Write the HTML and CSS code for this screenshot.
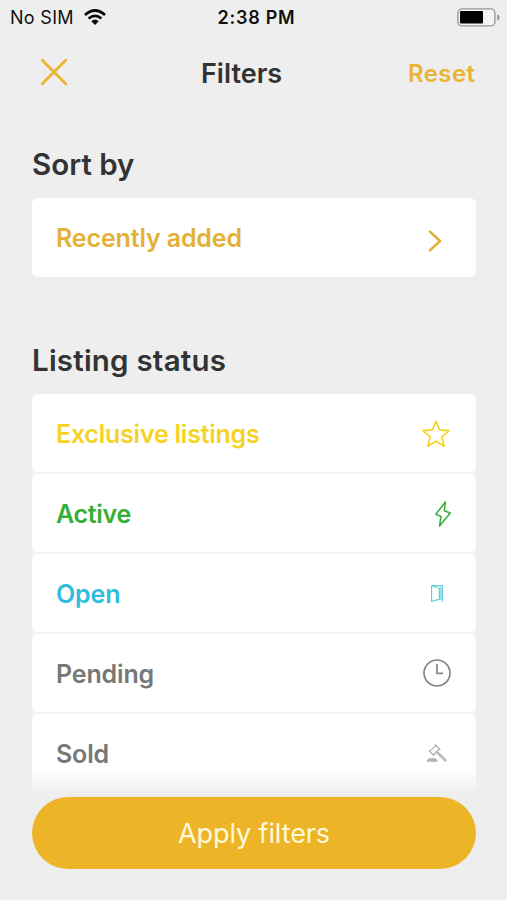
FILE: index.html
```html
<!DOCTYPE html>
<html lang="en">
<head>
<meta charset="utf-8">
<title>Filters</title>
<link rel="stylesheet" href="styles.css">
</head>
<body>
<div class="screen">
  <div class="status-bar">
    <div class="carrier"><span>No SIM</span>
      <svg class="wifi" viewBox="0 0 22 16" width="22" height="16" fill="none" stroke="#080808" stroke-width="2.7"><path d="M1 6Q11-3 21 6M4.6 9.6Q11 4 17.4 9.6"/><path d="M7.3 12.2Q11 9 14.7 12.2L11 16Z" fill="#080808" stroke="none"/></svg>
    </div>
    <span class="time">2:38 PM</span>
    <svg class="battery" viewBox="0 0 43 19" width="43" height="19"><rect x=".9" y=".9" width="37" height="17" rx="4.2" fill="#f4f4f4" stroke="#989898" stroke-width="1.4"/><rect x="3" y="3" width="23" height="12.5" rx="1" fill="#000"/><path d="M40.3 6.5q2.2.7 2.2 3t-2.2 3z" fill="#888"/></svg>
  </div>
  <header class="header">
    <button class="close" aria-label="Close"><svg viewBox="0 0 28 28" width="28" height="28" fill="none" stroke="#ebb434" stroke-width="2.9" stroke-linecap="round"><path d="M2.3 2.3 25.7 25.7M25.7 2.3 2.3 25.7"/></svg></button>
    <h1 class="title">Filters</h1>
    <button class="reset">Reset</button>
  </header>
  <main class="content">
    <section class="section">
      <h2 class="sort-heading">Sort by</h2>
      <div class="card sort"><span class="sort-label">Recently added</span>
        <svg class="chevron" viewBox="0 0 14 22" width="14" height="22" fill="none" stroke="#dfae38" stroke-width="2.6" stroke-linecap="round" stroke-linejoin="round"><path d="M2 1.6 12 11 2 20.4"/></svg>
      </div>
    </section>
    <section class="section">
      <h2 class="status-heading">Listing status</h2>
      <div class="list">
        <div class="card exclusive"><span class="exclusive-label">Exclusive listings</span>
          <svg class="star" viewBox="0 0 30 30" width="30" height="30" fill="none" stroke="#f5d322" stroke-width="1.7" stroke-linejoin="round"><path d="M15 2.2 18.5 10.8 28 11.7 20.9 17.8 23.1 27.2 15 22.2 6.9 27.2 9.1 17.8 2 11.7 11.5 10.8Z"/></svg>
        </div>
        <div class="card active"><span class="active-label">Active</span>
          <svg class="bolt" viewBox="0 0 18 28" width="18" height="28" fill="none" stroke="#36ad35" stroke-width="1.5" stroke-linejoin="round"><path d="M11.4 2 1.8 14.2 7 16.4 5.5 26 16.3 13 10.3 10.8Z"/></svg>
        </div>
        <div class="card open"><span class="open-label">Open</span>
          <svg class="door" viewBox="0 0 14 20" width="14" height="20" fill="none" stroke="#5fcbdc" stroke-width="1.1"><path d="M9.4 3H12.4V16H9.4Z" fill="#9be0ea" stroke="none"/><path d="M1.6 1.6H12.4V17.8M1.6 1.6V17.2L9.4 15.4V4.6L2 1.8"/></svg>
        </div>
        <div class="card pending"><span class="pending-label">Pending</span>
          <svg class="clock" viewBox="0 0 30 30" width="30" height="30" fill="none" stroke="#858585" stroke-width="1.7"><circle cx="15" cy="15" r="13"/><path d="M15 6V15.3H21"/></svg>
        </div>
        <div class="card sold"><span class="sold-label">Sold</span>
          <svg class="gavel" viewBox="0 0 22 20" width="22" height="20" fill="none" stroke="#b0b0b0" stroke-width="1.2" stroke-linejoin="round"><path d="M3.8 8.4 9.7 2.4 13.4 6 7.4 12ZM2.8 7.5 8.2 12.9M8.8 1.4 14.4 7"/><path d="M10.8 9 19.4 17.2" stroke-width="2.8" stroke-linecap="round" stroke="#bdbdbd"/><path d="M3 15.8H9.5L11 18.1H1.4Z" fill="#b5b5b5"/></svg>
        </div>
      </div>
    </section>
  </main>
  <footer class="footer"><button class="apply"><span>Apply filters</span></button></footer>
</div>
</body>
</html>
```

FILE: styles.css
```css
* { box-sizing: border-box; }
body { margin: 0; font-family: Inter, "Liberation Sans", sans-serif; background: #eee; }
button { border: 0; padding: 0; background: none; font-family: inherit; display: block; }
h1, h2 { margin: 0; font-weight: 600; color: #333; }
svg { display: block; flex: none; }
.screen { width: 507px; height: 900px; overflow: hidden; background: #eee; display: flex; flex-direction: column; }
.status-bar { height: 34px; flex: none; display: grid; grid-template-columns: 207.5px auto 1fr; align-items: center; padding: 0 8px 0 10px; font-size: 18px; color: #111; }
.carrier { display: flex; align-items: center; gap: 10px; white-space: nowrap; letter-spacing: 0.3px; }
.time { font-weight: 600; letter-spacing: 0.75px; }
.battery { justify-self: end; margin-right: -1px; }
.header { height: 79px; flex: none; display: grid; grid-template-columns: 161px 1fr auto; align-items: center; padding: 0 32px 0 40px; }
.title { font-size: 27px; }
.close { justify-self: start; padding-bottom: 4px; }
.reset { color: #ebb434; font-size: 24px; font-weight: 600; letter-spacing: 0.4px; margin-right: -0.4px; }
.content { flex: 1; min-height: 0; overflow: hidden; padding: 34px 31px 0 32px; }
.section { height: 196px; }
.section h2 { height: 51px; font-size: 29.5px; line-height: 34px; white-space: nowrap; }
.status-heading { letter-spacing: 0.22px; }
.card { height: 78px; border-radius: 6px; background: #fff; display: flex; align-items: center; justify-content: space-between; padding: 1px 24px 0; font-size: 25px; font-weight: 600; letter-spacing: -0.15px; color: #777; }
.list { display: grid; gap: 2px; background: #f3f3f3; border-radius: 6px; }
.sort { height: 79px; padding-top: 0; color: #e3b136; }
.chevron { margin: 6px 10px 0 0; }
.exclusive { color: #f5d322; letter-spacing: -0.23px; }
.star { margin-right: 1px; }
.active { color: #36ad35; letter-spacing: -0.3px; }
.open { color: #30bddc; }
.door { margin-right: 8px; }
.clock { margin-top: -1px; }
.gavel { margin: -2px 4px 0 0; }
.footer { height: 133px; flex: none; padding: 30px 31px 0 32px; margin-top: -30px; position: relative; background: linear-gradient(rgba(238,238,238,0), #eee 28px); }
.apply { width: 100%; height: 72px; border-radius: 36px; background: #edb428; color: #fff9d9; font-size: 27px; letter-spacing: -0.1px; }
```
